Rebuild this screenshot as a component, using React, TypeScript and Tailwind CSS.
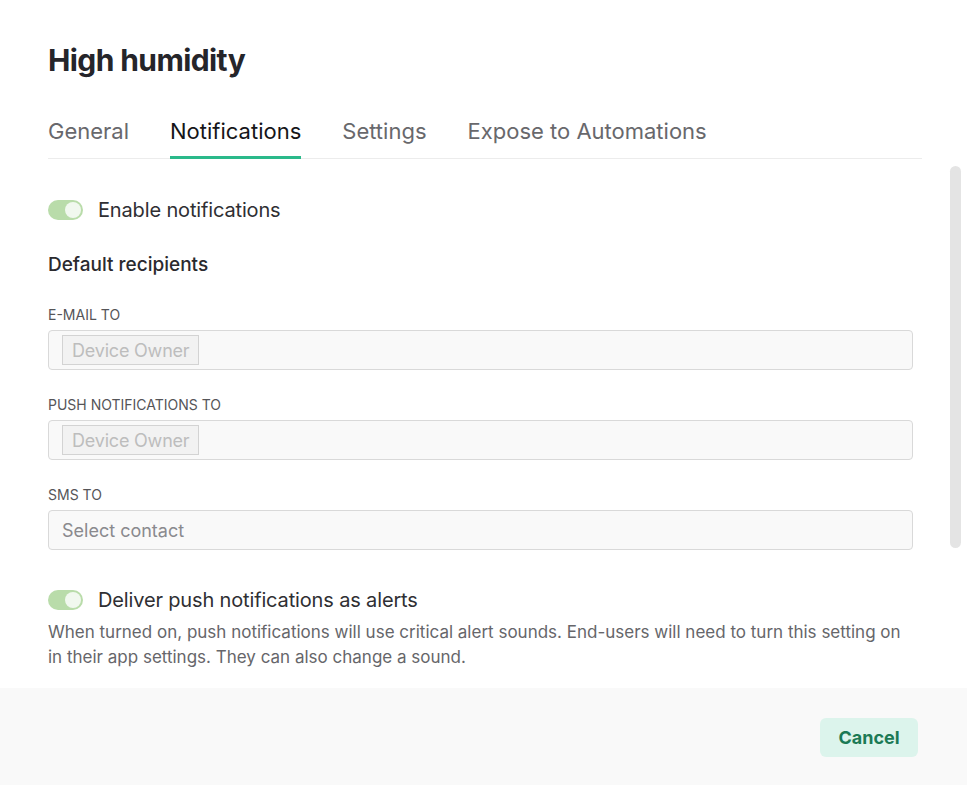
import React from "react";

type ToggleProps = {
  label: string;
};

function Toggle({ label }: ToggleProps) {
  return (
    <div className="flex items-center h-[20px]">
      <div className="w-[35px] h-[20px] rounded-full bg-[#b9dcaa] flex items-center justify-end pr-[2px]">
        <div className="w-[16px] h-[16px] rounded-full bg-[#f1f8ef]" />
      </div>
      <span className="ml-[15px] text-[20px] leading-[24px] text-[#2f2f33] tracking-[-0.15px]">{label}</span>
    </div>
  );
}

type FieldProps = {
  label: string;
  chip?: string;
  placeholder?: string;
  first?: boolean;
};

function Field({ label, chip, placeholder, first }: FieldProps) {
  return (
    <div className={first ? "mt-[29px]" : "mt-[26px]"}>
      <div className="text-[14px] leading-[18px] text-[#555558] uppercase">{label}</div>
      <div className="mt-[6px] h-[40px] w-full rounded-[4px] border border-[#d9d9d9] bg-[#f9f9f9] flex items-center px-[13px]">
        {chip ? (
          <span className="h-[30px] px-[9px] flex items-center border border-[#d3d3d3] bg-[#f2f2f2] text-[18px] text-[#bdbdbd] tracking-[-0.2px]">
            {chip}
          </span>
        ) : (
          <span className="text-[18px] text-[#8a8a8e]">{placeholder}</span>
        )}
      </div>
    </div>
  );
}

export default function App() {
  const tabs = ["General", "Notifications", "Settings", "Expose to Automations"];

  return (
    <div className="w-full h-[785px] bg-white flex flex-col font-['Inter',sans-serif] overflow-hidden">
      {/* Header */}
      <div className="pl-[48px] pr-[45px] pt-[42px]">
        <h1 className="text-[30px] leading-[36px] font-bold text-[#25252a] tracking-[-0.6px]">High humidity</h1>
        <div className="mt-[37px] flex gap-[41px] border-b border-[#ececec]">
          {tabs.map((t) => (
            <div
              key={t}
              className={
                t === "Notifications"
                  ? "pt-[2px] pb-[10px] -mb-px border-b-[3px] border-[#2ab98a] text-[22px] leading-[28px] text-[#151518]"
                  : "pt-[2px] pb-[13px] text-[22px] leading-[28px] text-[#68686c]"
              }
            >
              {t}
            </div>
          ))}
        </div>
      </div>

      {/* Scroll area */}
      <div className="flex-1 flex overflow-hidden">
        <div className="ml-[48px] w-[865px] pt-[41px]">
          <Toggle label="Enable notifications" />
          <h2 className="mt-[33px] text-[19px] leading-[24px] font-medium text-[#2a2a2e]">Default recipients</h2>
          <Field first label="E-mail to" chip="Device Owner" />
          <Field label="Push notifications to" chip="Device Owner" />
          <Field label="SMS to" placeholder="Select contact" />
          <div className="mt-[40px]">
            <Toggle label="Deliver push notifications as alerts" />
          </div>
          <p className="mt-[10px] text-[17px] leading-[25px] text-[#66666a]">
            When turned on, push notifications will use critical alert sounds. End-users will need to turn this setting on
            <br />
            in their app settings. They can also change a sound.
          </p>
        </div>
        <div className="ml-auto mr-[6px] w-[11px] pt-[7px]">
          <div className="h-[382px] w-full rounded-full bg-[#e4e4e4]" />
        </div>
      </div>

      {/* Footer */}
      <div className="h-[97px] bg-[#f9f9f9] flex justify-end items-start pt-[30px] pr-[49px]">
        <button className="w-[98px] h-[39px] rounded-[6px] bg-[#dcf4ec] text-[18px] font-bold text-[#1b7a55]">
          Cancel
        </button>
      </div>
    </div>
  );
}
